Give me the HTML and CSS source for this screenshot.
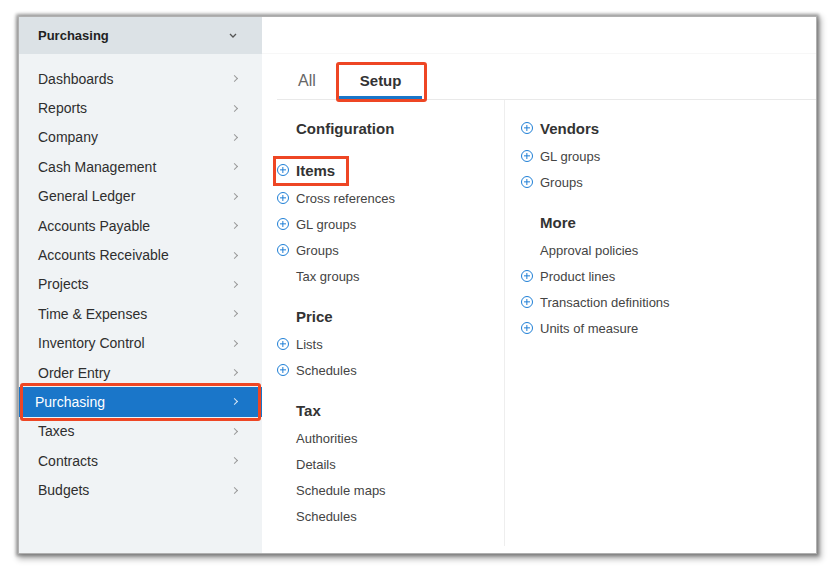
FILE: index.html
```html
<!DOCTYPE html>
<html lang="en">
  <head>
    <meta charset="UTF-8" />
    <title>Purchasing setup</title>
    <link rel="stylesheet" href="styles.css">
  </head>
  <body>
    <div class="frame">
      <div class="sidebar">
        <div class="side-head">
          <span>Purchasing</span>
          <svg class="chev-down" width="8" height="5" viewBox="0 0 8 5"><polyline points="1,1 4,4 7,1" fill="none" stroke="#555" stroke-width="1.3"/></svg>
        </div>
        <ul class="nav">
          <li>Dashboards<i class="chev"></i></li>
          <li>Reports<i class="chev"></i></li>
          <li>Company<i class="chev"></i></li>
          <li>Cash Management<i class="chev"></i></li>
          <li>General Ledger<i class="chev"></i></li>
          <li>Accounts Payable<i class="chev"></i></li>
          <li>Accounts Receivable<i class="chev"></i></li>
          <li>Projects<i class="chev"></i></li>
          <li>Time &amp; Expenses<i class="chev"></i></li>
          <li>Inventory Control<i class="chev"></i></li>
          <li>Order Entry<i class="chev"></i></li>
          <li class="active">Purchasing<i class="chev"></i></li>
          <li>Taxes<i class="chev"></i></li>
          <li>Contracts<i class="chev"></i></li>
          <li>Budgets<i class="chev"></i></li>
        </ul>
      </div>

      <div class="main">
        <div class="top-band"></div>
        <div class="tabs">
          <span class="tab">All</span>
          <span class="tab current">Setup</span>
        </div>
        <div class="cols">
          <div class="col first">
            <h3>Configuration</h3>
            <h3 class="plus marked"><i class="add"></i>Items</h3>
            <a class="plus"><i class="add"></i>Cross references</a>
            <a class="plus"><i class="add"></i>GL groups</a>
            <a class="plus"><i class="add"></i>Groups</a>
            <a>Tax groups</a>
            <h3>Price</h3>
            <a class="plus"><i class="add"></i>Lists</a>
            <a class="plus"><i class="add"></i>Schedules</a>
            <h3>Tax</h3>
            <a>Authorities</a>
            <a>Details</a>
            <a>Schedule maps</a>
            <a>Schedules</a>
          </div>
          <div class="col">
            <h3 class="plus"><i class="add"></i>Vendors</h3>
            <a class="plus"><i class="add"></i>GL groups</a>
            <a class="plus"><i class="add"></i>Groups</a>
            <h3>More</h3>
            <a>Approval policies</a>
            <a class="plus"><i class="add"></i>Product lines</a>
            <a class="plus"><i class="add"></i>Transaction definitions</a>
            <a class="plus"><i class="add"></i>Units of measure</a>
          </div>
        </div>
      </div>
    </div>
  </body>
</html>
```

FILE: styles.css
```css
body {
  margin: 0;
  padding-bottom: 15px;
  background-color: white;
  font-family: "Liberation Sans", Arial, sans-serif;
}

.frame {
  display: flex;
  margin: 17px 0 0 19px;
  width: 797px;
  height: 536px;
  box-shadow: 0 0 0 1px #b0b0b0, 0 0 3px 3px rgba(0, 0, 0, 0.32), 2px 3px 6px 3px rgba(0, 0, 0, 0.3);
}

.sidebar {
  width: 243px;
  background-color: #f0f3f5;
}

.side-head {
  height: 37px;
  display: flex;
  align-items: center;
  justify-content: space-between;
  padding: 0 25px 0 19px;
  background-color: #dce2e6;
  font-size: 13px;
  font-weight: bold;
  color: #222;
}

.nav {
  list-style: none;
  margin: 0;
  padding: 10px 0 0 0;
}

.nav li {
  position: relative;
  height: 29.4px;
  display: flex;
  align-items: center;
  justify-content: space-between;
  padding: 0 25px 0 19px;
  font-size: 14px;
  color: #2e2e2e;
}

.chev {
  width: 4px;
  height: 4px;
  border-top: 1.2px solid #999;
  border-right: 1.2px solid #999;
  transform: rotate(45deg);
}

.nav li.active {
  background-color: #1a76c9;
  color: white;
  padding-left: 16px;
}

.nav li.active .chev {
  border-color: #dbe8f5;
}

.nav li.active::after {
  content: "";
  position: absolute;
  top: -4px;
  bottom: -4px;
  left: 1px;
  right: 1px;
  border: 3px solid #ee4624;
  border-radius: 3px;
}

.main {
  flex: 1;
  background-color: white;
  display: flex;
  flex-direction: column;
}

.top-band {
  height: 36px;
  border-bottom: 1px solid #f7f7f7;
}

.tabs {
  height: 45px;
  margin-left: 15px;
  padding-left: 21px;
  display: flex;
  align-items: flex-end;
  border-bottom: 1px solid #e9e9e9;
}

.tab {
  height: 31px;
  display: flex;
  align-items: center;
  border-bottom: 3px solid transparent;
  font-size: 16px;
  color: #666;
}

.tab.current {
  position: relative;
  margin-left: 23px;
  padding: 0 21px;
  border-bottom-color: #1a76c9;
  font-size: 15px;
  font-weight: bold;
  color: #333;
}

.tab.current::after {
  content: "";
  position: absolute;
  top: -3px;
  bottom: -6px;
  left: -3px;
  right: -5px;
  border: 3px solid #ee4624;
  border-radius: 3px;
}

.cols {
  flex: 1;
  display: flex;
  margin-left: 15px;
  padding-bottom: 7px;
}

.col {
  display: flex;
  flex-direction: column;
  align-items: flex-start;
  padding-top: 14px;
  padding-left: 16px;
}

.col.first {
  width: 227px;
  padding-left: 0;
  border-right: 1px solid #eeeeee;
}

.col h3 {
  height: 28px;
  margin: 13px 0 1px 0;
  padding-left: 19px;
  display: flex;
  align-items: center;
  font-size: 15px;
  font-weight: bold;
  color: #333;
}

.col h3:first-child {
  margin-top: 0;
}

.col.first h3.marked {
  position: relative;
  margin-top: 13px;
}

.col h3.marked::after {
  content: "";
  position: absolute;
  top: 0;
  bottom: -2px;
  left: -4px;
  width: 70px;
  border: 3px solid #ee4624;
}

.col a {
  height: 26px;
  padding-left: 19px;
  display: flex;
  align-items: center;
  font-size: 13px;
  color: #444;
}

.col .plus {
  padding-left: 0;
}

.add {
  width: 10px;
  height: 10px;
  margin-right: 7px;
  border: 1.3px solid #1f7fd6;
  border-radius: 50%;
  position: relative;
  flex: none;
}

.add::before,
.add::after {
  content: "";
  position: absolute;
  background-color: #1f7fd6;
  left: 50%;
  top: 50%;
  transform: translate(-50%, -50%);
}

.add::before {
  width: 6px;
  height: 1.3px;
}

.add::after {
  width: 1.3px;
  height: 6px;
}
```
